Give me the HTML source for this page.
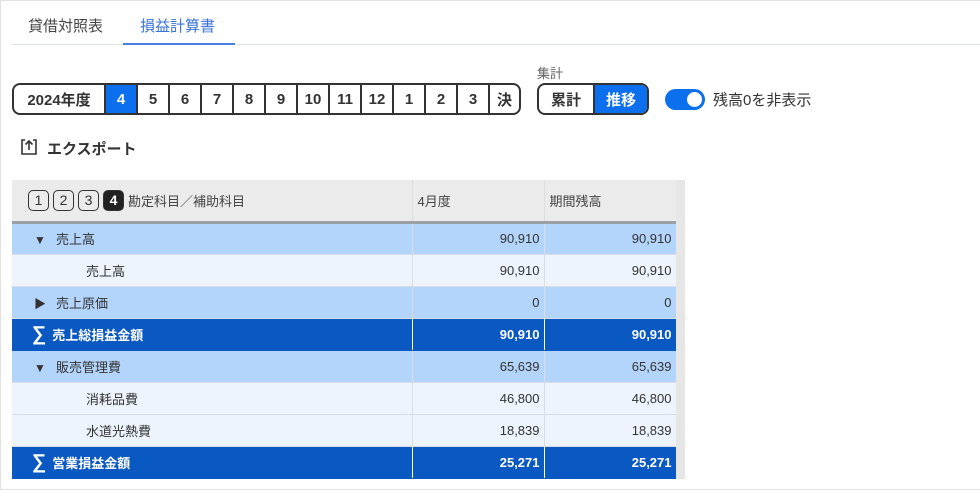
<!DOCTYPE html>
<html><head><meta charset="utf-8"><style>
*{box-sizing:border-box;margin:0;padding:0}
body{width:980px;height:490px;background:#fff;font-family:"Liberation Sans","Noto Sans CJK JP",sans-serif;color:#333;position:relative;overflow:hidden}
.frame{position:absolute;left:0;top:0;width:980px;height:490px;border:1px solid #e2e2e2;border-right:none}
.tabline{position:absolute;left:11px;top:44px;width:969px;height:1px;background:#dde3ea}
.tab{position:absolute;top:15px;font-size:15px;color:#444}
.tab2{color:#3b73d6}
.tabul{position:absolute;left:123px;top:43px;width:112px;height:2px;background:#4a80dc}
.seg{position:absolute;display:flex;border:2px solid #333;border-radius:8px;overflow:hidden;height:32px;background:#fff}
.seg div{border-left:2px solid #333;display:flex;align-items:center;justify-content:center;font-weight:bold;font-size:15px;color:#333}
.seg div:first-child{border-left:none}
.seg .on{background:#0b6fee;color:#fff}
.lbl{position:absolute;left:537px;top:63px;font-size:13px;color:#666}
.tog{position:absolute;left:665px;top:89px;width:40px;height:21px;border-radius:11px;background:#0b6fee}
.tog::after{content:"";position:absolute;right:3px;top:3px;width:15px;height:15px;border-radius:50%;background:#fff}
.togl{position:absolute;left:713px;top:89px;font-size:15px;color:#333}
.exp{position:absolute;left:47px;top:138px;font-size:15px;font-weight:bold;color:#333}
table{position:absolute;left:12px;top:180px;border-collapse:collapse;font-size:13px}
td,th{height:32px;border-right:1px solid #dadde2;border-bottom:1px solid #d6dde7}
th{height:42px;background:#ebebeb;font-weight:normal;text-align:left;padding-left:5px;border-bottom:3px solid #9aa0a6;vertical-align:middle;color:#444}
td.n{text-align:right;padding-right:4px}
tr.a td{background:#b3d4fb;color:#333}
tr.b td{background:#edf4fd;color:#333}
tr.c td{background:#0a58c2;color:#fff;font-weight:bold;border-right-color:#fff;border-bottom-color:#0a58c2}
.scr{position:absolute;left:676px;top:180px;width:9px;height:299px;background:#e6e6e6}
.lv{display:inline-flex;align-items:center;justify-content:center;width:21px;height:21px;border:1px solid #333;border-radius:5px;font-size:14px;margin-right:4px;vertical-align:middle;color:#333}
.lv.on{background:#222;color:#fff;font-weight:bold}
.tri{display:inline-block;width:14px;font-size:12px;margin-right:8px}
</style></head><body>
<div class="frame"></div>
<div class="tab" style="left:28px">貸借対照表</div>
<div class="tab tab2" style="left:140px">損益計算書</div>
<div class="tabline"></div><div class="tabul"></div>
<div class="seg" style="left:12px;top:83px;width:509px">
<div style="width:90px">2024年度</div><div class="on" style="width:32px">4</div><div style="width:32px">5</div><div style="width:32px">6</div><div style="width:32px">7</div><div style="width:32px">8</div><div style="width:32px">9</div><div style="width:32px">10</div><div style="width:32px">11</div><div style="width:32px">12</div><div style="width:32px">1</div><div style="width:32px">2</div><div style="width:32px">3</div><div style="flex:1">決</div>
</div>
<div class="lbl">集計</div>
<div class="seg" style="left:537px;top:83px;width:112px"><div style="width:54px">累計</div><div class="on" style="flex:1">推移</div></div>
<div class="tog"></div><div class="togl">残高0を非表示</div>
<svg style="position:absolute;left:20px;top:138px" width="18" height="18" viewBox="0 0 18 18" fill="none" stroke="#333" stroke-width="1.6"><path d="M5 2H2v14h14V2h-3"/><path d="M9 12V3M5.5 6.5L9 3l3.5 3.5"/></svg>
<div class="exp">エクスポート</div>
<table>
<tr><th style="width:400px;padding-left:16px"><span class="lv">1</span><span class="lv">2</span><span class="lv">3</span><span class="lv on">4</span><span style="vertical-align:middle">勘定科目／補助科目</span></th><th style="width:132px">4月度</th><th style="width:132px">期間残高</th></tr>
<tr class="a"><td style="padding-left:22px"><span class="tri">▼</span>売上高</td><td class="n">90,910</td><td class="n">90,910</td></tr>
<tr class="b"><td style="padding-left:74px">売上高</td><td class="n">90,910</td><td class="n">90,910</td></tr>
<tr class="a"><td style="padding-left:22px"><span class="tri">▶</span>売上原価</td><td class="n">0</td><td class="n">0</td></tr>
<tr class="c"><td style="padding-left:20px"><span style="font-size:20px;margin-right:6px;font-weight:bold">∑</span>売上総損益金額</td><td class="n">90,910</td><td class="n">90,910</td></tr>
<tr class="a"><td style="padding-left:22px"><span class="tri">▼</span>販売管理費</td><td class="n">65,639</td><td class="n">65,639</td></tr>
<tr class="b"><td style="padding-left:74px">消耗品費</td><td class="n">46,800</td><td class="n">46,800</td></tr>
<tr class="b"><td style="padding-left:74px">水道光熱費</td><td class="n">18,839</td><td class="n">18,839</td></tr>
<tr class="c"><td style="padding-left:20px"><span style="font-size:20px;margin-right:6px;font-weight:bold">∑</span>営業損益金額</td><td class="n">25,271</td><td class="n">25,271</td></tr>
</table>
<div class="scr"></div>
</body></html>
